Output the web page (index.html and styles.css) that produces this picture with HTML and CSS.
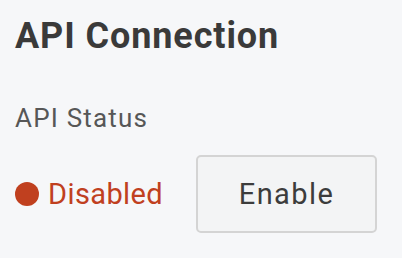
FILE: index.html
```html
<!DOCTYPE html>
<html lang="en">
<head>
    <meta charset="UTF-8">
    <meta name="viewport" content="width=device-width, initial-scale=1.0">
    <title>API Connection</title>
    <link rel="stylesheet" href="styles.css">
</head>
<body>
    <h2 class="section-title">API Connection</h2>

    <div class="field">
        <div class="field-label">API Status</div>
        <div class="status-row">
            <span class="status disabled"><span class="dot"></span>Disabled</span>
            <button class="btn">Enable</button>
        </div>
    </div>
</body>
</html>
```

FILE: styles.css
```css
body {
    font-family: Roboto, "Noto Sans", sans-serif;
    background-color: #f6f7f9;
    margin: 0;
    padding: 14px 15px;
}
.section-title {
    margin: 0;
    font-size: 36px;
    font-weight: 700;
    color: #3a3a3a;
    line-height: 44px;
    letter-spacing: 0.9px;
}
.field {
    margin-top: 44px;
}
.field-label {
    font-size: 26px;
    color: #575757;
    line-height: 32px;
    letter-spacing: 1.2px;
}
.status-row {
    display: flex;
    align-items: center;
    margin-top: 21px;
}
.status {
    display: flex;
    align-items: center;
    font-size: 29px;
    letter-spacing: 0.4px;
    width: 181px;
}
.status.disabled {
    color: #c0401f;
}
.dot {
    width: 24px;
    height: 24px;
    border-radius: 50%;
    background-color: #c0401f;
    margin-right: 9px;
}
.btn {
    width: 181px;
    height: 78px;
    font-family: inherit;
    font-size: 29px;
    color: #3c3c3c;
    background-color: #f3f4f5;
    border: 2px solid #d4d4d4;
    border-radius: 5px;
    letter-spacing: 1.4px;
}
```
